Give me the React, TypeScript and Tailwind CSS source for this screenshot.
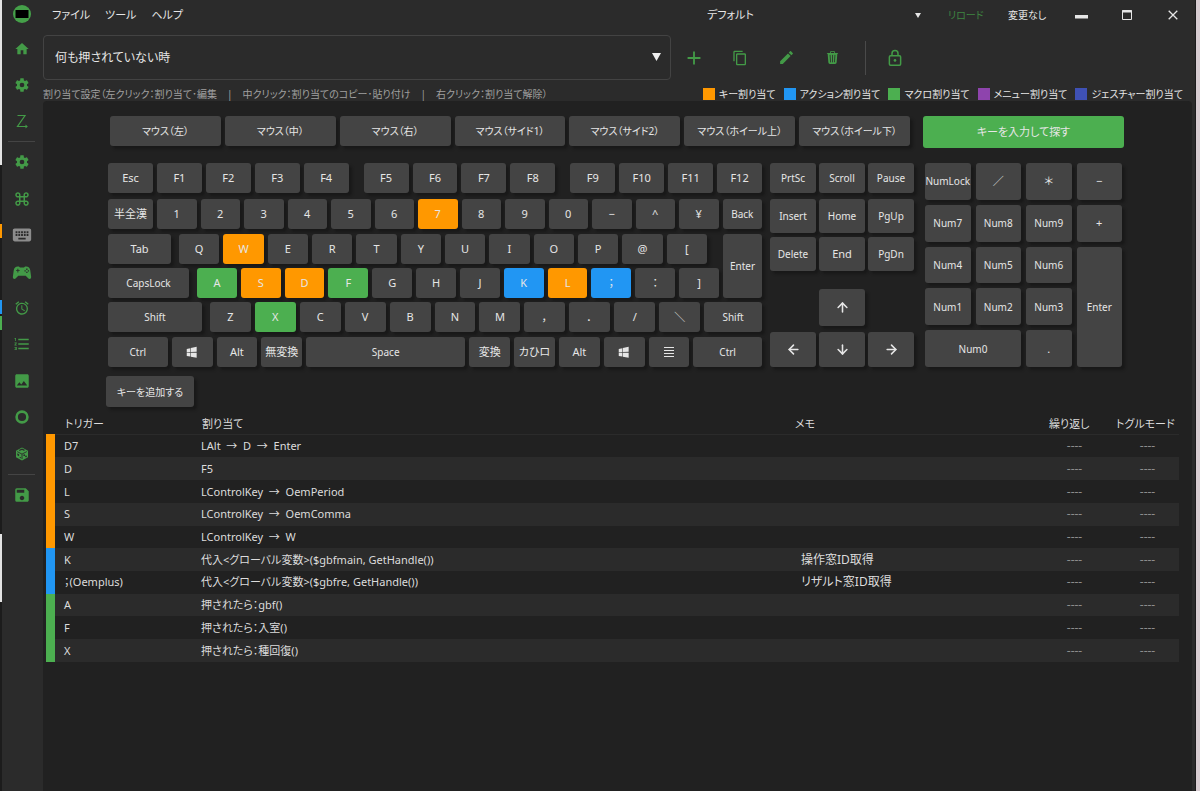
import React, { useState } from 'react';
import {
  MdAdd,
  MdAlarm,
  MdContentCopy,
  MdEdit,
  MdFormatListNumbered,
  MdHome,
  MdImage,
  MdKeyboardCommandKey,
  MdSave,
} from 'react-icons/md';
import { BsTrash3Fill } from 'react-icons/bs';
import { ArrowDown, ArrowLeft, ArrowRight, ArrowUp } from 'lucide-react';
import clsx from 'clsx';

type Kind = 'key' | 'action' | 'macro' | 'menu' | 'gesture';

const kindColor: Record<Kind, string> = {
  key: 'bg-[#ff9800]',
  action: 'bg-[#2196f3]',
  macro: 'bg-[#4caf50]',
  menu: 'bg-[#8e44ad]',
  gesture: 'bg-[#3f51b5]',
};

const legend: { kind: Kind; label: string }[] = [
  { kind: 'key', label: 'キー割り当て' },
  { kind: 'action', label: 'アクション割り当て' },
  { kind: 'macro', label: 'マクロ割り当て' },
  { kind: 'menu', label: 'メニュー割り当て' },
  { kind: 'gesture', label: 'ジェスチャー割り当て' },
];

const assignments: { kind: Kind; trigger: string; action: string; memo?: string }[] = [
  { kind: 'key', trigger: 'D7', action: 'LAlt  →  D  →  Enter' },
  { kind: 'key', trigger: 'D', action: 'F5' },
  { kind: 'key', trigger: 'L', action: 'LControlKey  →  OemPeriod' },
  { kind: 'key', trigger: 'S', action: 'LControlKey  →  OemComma' },
  { kind: 'key', trigger: 'W', action: 'LControlKey  →  W' },
  { kind: 'action', trigger: 'K', action: '代入<グローバル変数>($gbfmain, GetHandle())', memo: '操作窓ID取得' },
  { kind: 'action', trigger: '；(Oemplus)', action: '代入<グローバル変数>($gbfre, GetHandle())', memo: 'リザルト窓ID取得' },
  { kind: 'macro', trigger: 'A', action: '押されたら：gbf()' },
  { kind: 'macro', trigger: 'F', action: '押されたら：入室()' },
  { kind: 'macro', trigger: 'X', action: '押されたら：種回復()' },
];

const mouseKeys = [
  'マウス（左）',
  'マウス（中）',
  'マウス（右）',
  'マウス（サイド1）',
  'マウス（サイド2）',
  'マウス（ホイール上）',
  'マウス（ホイール下）',
];

interface KeyProps {
  children: React.ReactNode;
  kind?: Kind;
  className?: string;
  label?: string;
}

// Longer captions drop one text size so that they fit on the cap
const Key: React.FC<KeyProps> = ({ children, kind, className = 'flex-1', label }) => (
  <button
    aria-label={label}
    className={clsx(
      'flex min-w-0 items-center justify-center rounded-[3px] whitespace-nowrap text-[#e6e6e6] shadow-[3px_3px_3px_rgba(0,0,0,0.28)]',
      typeof children === 'string' && children.length > 3 ? 'text-[10px]' : 'text-[11px]',
      kind ? kindColor[kind] : 'bg-[#444444]',
      className
    )}
  >
    {children}
  </button>
);

const Keys: React.FC<{ names: string[]; kinds?: Record<string, Kind> }> = ({ names, kinds = {} }) => (
  <>
    {names.map((name) => (
      <Key key={name} kind={kinds[name]}>
        {name}
      </Key>
    ))}
  </>
);

const CogIcon = () => (
  <svg viewBox="0 0 24 24" className="size-4" fill="currentColor">
    <path d="M12,15.5A3.5,3.5 0 0,1 8.5,12A3.5,3.5 0 0,1 12,8.5A3.5,3.5 0 0,1 15.5,12A3.5,3.5 0 0,1 12,15.5M19.43,12.97C19.47,12.65 19.5,12.33 19.5,12C19.5,11.67 19.47,11.34 19.43,11L21.54,9.37C21.73,9.22 21.78,8.95 21.66,8.73L19.66,5.27C19.54,5.05 19.27,4.96 19.05,5.05L16.56,6.05C16.04,5.66 15.5,5.32 14.87,5.07L14.5,2.42C14.46,2.18 14.25,2 14,2H10C9.75,2 9.54,2.18 9.5,2.42L9.13,5.07C8.5,5.32 7.96,5.66 7.44,6.05L4.95,5.05C4.73,4.96 4.46,5.05 4.34,5.27L2.34,8.73C2.21,8.95 2.27,9.22 2.46,9.37L4.57,11C4.53,11.34 4.5,11.67 4.5,12C4.5,12.33 4.53,12.65 4.57,12.97L2.46,14.63C2.27,14.78 2.21,15.05 2.34,15.27L4.34,18.73C4.46,18.95 4.73,19.03 4.95,18.95L7.44,17.94C7.96,18.34 8.5,18.68 9.13,18.93L9.5,21.58C9.54,21.82 9.75,22 10,22H14C14.25,22 14.46,21.82 14.5,21.58L14.87,18.93C15.5,18.67 16.04,18.34 16.56,17.94L19.05,18.95C19.27,19.03 19.54,18.95 19.66,18.73L21.66,15.27C21.78,15.05 21.73,14.78 21.54,14.63L19.43,12.97Z" />
  </svg>
);

const ZigzagIcon = () => (
  <svg viewBox="0 0 16 16" className="size-4" fill="none" stroke="currentColor" strokeWidth="1.2">
    <path d="M3.5 2.5h7.500l-7.500 11h9" />
    <path d="M11.500 11.600l2.300 1.900-2.300 1.900z" fill="currentColor" stroke="none" />
  </svg>
);

const KeyboardIcon = () => (
  <svg viewBox="0 0 24 24" className="size-[22px]" fill="currentColor">
    <path d="M19,10H17V8H19M19,13H17V11H19M16,10H14V8H16M16,13H14V11H16M16,17H8V15H16M7,10H5V8H7M7,13H5V11H7M8,11H10V13H8M8,8H10V10H8M11,11H13V13H11M11,8H13V10H11M20,5H4C2.89,5 2,5.89 2,7V17A2,2 0 0,0 4,19H20A2,2 0 0,0 22,17V7C22,5.89 21.1,5 20,5Z" />
  </svg>
);

const GamepadIcon = () => (
  <svg viewBox="0 0 24 24" className="size-[22px]" fill="currentColor" fillRule="evenodd">
    <path d="M7.97,16L5,19C4.67,19.3 4.23,19.5 3.75,19.5A1.75,1.75 0 0,1 2,17.75V17.5L3,10.12C3.21,7.81 5.14,6 7.5,6H8.6L9.8,7.2H14.2L15.4,6H16.5C18.86,6 20.79,7.81 21,10.12L22,17.5V17.75A1.75,1.75 0 0,1 20.25,19.5C19.77,19.5 19.33,19.3 19,19L16.03,16H7.97M7,8.5V10H5.5V11H7V12.5H8V11H9.5V10H8V8.5H7M16.6,8.3V9.7H18V8.3H16.6M14.7,10V11.4H16.1V10H14.7M18.3,10V11.4H19.7V10H18.3M16.6,11.7V13.1H18V11.7H16.6Z" />
  </svg>
);

const RingIcon = () => (
  <svg viewBox="0 0 16 16" className="size-4" fill="none" stroke="currentColor" strokeWidth="2.6">
    <circle cx="8" cy="8" r="5.4" />
  </svg>
);

const CubeIcon = () => (
  <svg viewBox="0 0 16 16" className="size-4">
    <path d="M8 1.500l6 3.200v6.600l-6 3.200-6-3.200V4.700z" fill="currentColor" />
    <g fill="none" stroke="#2b2b2b">
      <path d="M3.200 5.600L8 8.100v5M8 8.100l4.800-2.500" strokeWidth=".9" />
      <path d="M5.200 4.500L8 3.100l2.500 1.300" strokeWidth="1.200" />
    </g>
    <g fill="#2b2b2b">
      <path d="M3.300 7.300l1.800 1v2l-1.800-1z" />
      <circle cx="10.200" cy="9.200" r=".9" />
      <circle cx="12" cy="10.300" r=".9" />
      <circle cx="6.300" cy="11.600" r=".7" />
    </g>
  </svg>
);

const LockIcon = () => (
  <svg viewBox="0 0 24 24" className="size-[18px]" fill="none" stroke="currentColor" strokeWidth="2">
    <rect x="4.500" y="9" width="15" height="12.500" rx="1.500" />
    <path d="M8 9V6a4 4 0 0 1 8 0v3" />
    <circle cx="12" cy="15.200" r="1.800" fill="currentColor" stroke="none" />
  </svg>
);

const WindowsIcon = () => (
  <svg viewBox="0 0 24 24" className="size-[14px]" fill="currentColor">
    <path d="M3,12V6.75L9,5.43V11.91L3,12M20,3V11.75L10,11.9V5.21L20,3M3,13L9,13.09V19.9L3,18.75V13M20,13.25V22L10,20.09V13.1L20,13.25Z" />
  </svg>
);

const MenuKeyIcon = () => (
  <svg viewBox="0 0 12 12" className="size-3" fill="currentColor" shapeRendering="crispEdges">
    <path d="M1 1h10v1H1zM1 4h10v1H1zM1 7h10v1H1zM1 10h10v1H1z" />
  </svg>
);

const SideButton: React.FC<{ label: string; active?: boolean; children: React.ReactNode }> = ({ label, active, children }) => (
  <button
    aria-label={label}
    className={clsx('flex items-center justify-center', active ? 'text-[#8c8c8c]' : 'text-[#439a47]')}
  >
    {children}
  </button>
);

const Sidebar = () => (
  <aside className="flex w-[41px] shrink-0 flex-col pr-[2px]">
    <div className="flex h-[31px] items-center justify-center pb-[3px]">
      <svg viewBox="0 0 18 18" className="size-[18px]">
        <circle cx="9" cy="9" r="9" fill="#45a049" />
        <rect x="2.500" y="5" width="13" height="8" fill="#000" />
      </svg>
    </div>
    <nav className="grid h-[108px] grid-rows-3">
      <SideButton label="ホーム"><MdHome size={16} /></SideButton>
      <SideButton label="設定"><CogIcon /></SideButton>
      <SideButton label="ジェスチャー"><ZigzagIcon /></SideButton>
    </nav>
    <hr className="mx-[6px] my-[2px] border-[#444444]" />
    <nav className="grid h-[328px] grid-rows-9">
      <SideButton label="プロファイル設定"><CogIcon /></SideButton>
      <SideButton label="コマンド"><MdKeyboardCommandKey size={18} /></SideButton>
      <SideButton label="キーボード" active><KeyboardIcon /></SideButton>
      <SideButton label="ゲームパッド"><GamepadIcon /></SideButton>
      <SideButton label="タイマー"><MdAlarm size={16} /></SideButton>
      <SideButton label="リスト"><MdFormatListNumbered size={18} /></SideButton>
      <SideButton label="画像"><MdImage size={18} /></SideButton>
      <SideButton label="リング"><RingIcon /></SideButton>
      <SideButton label="パッケージ"><CubeIcon /></SideButton>
    </nav>
    <hr className="mx-[6px] my-[2px] border-[#444444]" />
    <div className="grid h-9">
      <SideButton label="保存"><MdSave size={18} /></SideButton>
    </div>
  </aside>
);

const TitleBar = () => (
  <header className="-mr-1 flex h-[29px] items-center text-[11px] text-[#e6e6e6]">
    <nav className="flex flex-1 gap-[15px] pl-[9px]">
      <button>ファイル</button>
      <button>ツール</button>
      <button>ヘルプ</button>
    </nav>
    <div className="relative w-[214px]">
      <select aria-label="プロファイル" className="w-full appearance-none bg-transparent outline-none">
        <option>デフォルト</option>
      </select>
      <svg viewBox="0 0 6 5" className="pointer-events-none absolute top-[6px] right-0 w-[6px]" fill="#e6e6e6">
        <path d="M0 0h6L3 5z" />
      </svg>
    </div>
    <button className="ml-[27px] w-8 text-[10px] whitespace-nowrap text-[#3e8441]">リロード</button>
    <span className="ml-[28px] w-[50px] text-[10px] whitespace-nowrap">変更なし</span>
    <div className="flex w-[138px] shrink-0">
      <button aria-label="最小化" className="grid h-[29px] flex-1 place-items-center">
        <svg viewBox="0 0 13 12" className="w-[13px]" fill="currentColor"><path d="M0 6h13v3.500H0z" /></svg>
      </button>
      <button aria-label="最大化" className="grid h-[29px] flex-1 place-items-center">
        <svg viewBox="0 0 10 10" className="w-[10px]" fill="none" stroke="currentColor">
          <path d="M.5.500h9v9h-9z" />
          <path d="M0 1.500h10" strokeWidth="2" />
        </svg>
      </button>
      <button aria-label="閉じる" className="grid h-[29px] flex-1 place-items-center">
        <svg viewBox="0 0 10 10" className="w-[10px]" fill="none" stroke="currentColor" strokeWidth="1.300">
          <path d="M.7.700l8.600 8.600M9.300.700L.700 9.300" />
        </svg>
      </button>
    </div>
  </header>
);

const Toolbar = () => (
  <div className="flex items-center pt-[6px] text-[#439a47]">
    <div className="relative flex-[628]">
      <select
        aria-label="条件"
        className="h-[45px] w-full appearance-none rounded-[4px] border border-[#434343] bg-transparent px-[11px] text-[#e6e6e6] outline-none"
      >
        <option>何も押されていない時</option>
      </select>
      <svg viewBox="0 0 9 8" className="pointer-events-none absolute top-[18px] right-[10px] w-[9px]" fill="#f0f0f0">
        <path d="M0 0h9L4.500 8z" />
      </svg>
    </div>
    <div className="flex h-[34px] flex-[521]">
      <button aria-label="追加" className="grid w-[46px] place-items-center"><MdAdd size={22} /></button>
      <button aria-label="コピー" className="grid w-[46px] place-items-center"><MdContentCopy size={16} /></button>
      <button aria-label="編集" className="grid w-[46px] place-items-center"><MdEdit size={17} /></button>
      <button aria-label="削除" className="grid w-[46px] place-items-center"><BsTrash3Fill size={13} /></button>
      <div className="mx-[10px] w-px bg-[#4a4a4a]" />
      <button aria-label="ロック" className="grid w-[38px] place-items-center"><LockIcon /></button>
    </div>
  </div>
);

const Keyboard = () => (
  <div className="flex flex-[654] flex-col">
    <div className="flex h-[30px] gap-[15px]">
      <div className="flex flex-[241] gap-1"><Keys names={['Esc', 'F1', 'F2', 'F3', 'F4']} /></div>
      <div className="flex flex-[192] gap-1"><Keys names={['F5', 'F6', 'F7', 'F8']} /></div>
      <div className="flex flex-[192] gap-1"><Keys names={['F9', 'F10', 'F11', 'F12']} /></div>
    </div>
    <div className="mt-[6px] flex h-[30px] gap-1">
      <Key className="w-[45px] shrink-0">半全漢</Key>
      <Keys names={['1', '2', '3', '4', '5', '6', '7', '8', '9', '0', '−', '^', '¥', 'Back']} kinds={{ '7': 'key' }} />
    </div>
    <div className="mt-[5px] flex gap-1">
      <div className="flex flex-[611] flex-col gap-1">
        <div className="flex h-[30px] gap-2 pr-3">
          <Key className="w-[63px] shrink-0">Tab</Key>
          <div className="flex flex-1 gap-1">
            <Keys names={['Q', 'W', 'E', 'R', 'T', 'Y', 'U', 'I', 'O', 'P', '@', '[']} kinds={{ W: 'key' }} />
          </div>
        </div>
        <div className="flex h-[30px] gap-2">
          <Key className="w-[81px] shrink-0">CapsLock</Key>
          <div className="flex flex-1 gap-1">
            <Keys
              names={['A', 'S', 'D', 'F', 'G', 'H', 'J', 'K', 'L', '；', '：', ']']}
              kinds={{ A: 'macro', S: 'key', D: 'key', F: 'macro', K: 'action', L: 'key', '；': 'action' }}
            />
          </div>
        </div>
      </div>
      <Key className="flex-[39]">Enter</Key>
    </div>
    <div className="mt-1 flex h-[30px] gap-1">
      <Key className="mr-1 flex-[94]">Shift</Key>
      <div className="flex flex-[491] gap-1">
        <Keys names={['Z', 'X', 'C', 'V', 'B', 'N', 'M', '，', '．', '/', '＼']} kinds={{ X: 'macro' }} />
      </div>
      <Key className="flex-[58]">Shift</Key>
    </div>
    <div className="mt-[5px] flex h-[30px] gap-1">
      <Key className="flex-[60]">Ctrl</Key>
      <Key className="flex-[41]" label="Windows"><WindowsIcon /></Key>
      <Key className="flex-[41]">Alt</Key>
      <Key className="flex-[41]">無変換</Key>
      <Key className="flex-[160]">Space</Key>
      <Key className="flex-[41]">変換</Key>
      <Key className="flex-[41]">カひロ</Key>
      <Key className="flex-[41]">Alt</Key>
      <Key className="flex-[41]" label="Windows"><WindowsIcon /></Key>
      <Key className="flex-[41]" label="Menu"><MenuKeyIcon /></Key>
      <Key className="flex-[69]">Ctrl</Key>
    </div>
  </div>
);

const NavigationKeys = () => (
  <div className="flex flex-[144] flex-col">
    <div className="flex h-[30px] gap-[3px]">
      <Keys names={['PrtSc', 'Scroll', 'Pause']} />
    </div>
    <div className="mt-[6px] flex h-[34px] gap-[3px]">
      <Keys names={['Insert', 'Home', 'PgUp']} />
    </div>
    <div className="mt-1 flex h-[34px] gap-[3px]">
      <Keys names={['Delete', 'End', 'PgDn']} />
    </div>
    <div className="mt-auto grid grid-cols-3 grid-rows-[37px_35px] gap-x-[3px] gap-y-[6px]">
      <Key className="col-start-2" label="Up"><ArrowUp size={15} strokeWidth={2.5} /></Key>
      <Key className="col-start-1" label="Left"><ArrowLeft size={15} strokeWidth={2.5} /></Key>
      <Key className="" label="Down"><ArrowDown size={15} strokeWidth={2.5} /></Key>
      <Key className="" label="Right"><ArrowRight size={15} strokeWidth={2.5} /></Key>
    </div>
  </div>
);

const Numpad = () => (
  <div className="grid flex-[197] grid-cols-4 grid-rows-5 gap-[5px]">
    <Key className="">NumLock</Key>
    <Key className="">／</Key>
    <Key className="">＊</Key>
    <Key className="">−</Key>
    <Key className="">Num7</Key>
    <Key className="">Num8</Key>
    <Key className="">Num9</Key>
    <Key className="">+</Key>
    <Key className="">Num4</Key>
    <Key className="">Num5</Key>
    <Key className="">Num6</Key>
    <Key className="row-span-3">Enter</Key>
    <Key className="">Num1</Key>
    <Key className="">Num2</Key>
    <Key className="">Num3</Key>
    <Key className="col-span-2">Num0</Key>
    <Key className="">.</Key>
  </div>
);

const AssignmentTable = () => (
  <table className="h-[247px] w-full table-fixed border-collapse text-left text-[11px] text-[#dcdcdc]">
    <colgroup>
      <col className="w-[9px]" />
      <col className="w-[137px]" />
      <col />
      <col className="w-[248px]" />
      <col className="w-[73px]" />
      <col className="w-[73px]" />
    </colgroup>
    <thead>
      <tr className="h-[19px] whitespace-nowrap">
        <th />
        <th className="border-b border-[#2b2b2b] pl-[10px] font-normal">トリガー</th>
        <th className="border-b border-[#2b2b2b] pl-[10px] font-normal">割り当て</th>
        <th className="border-b border-[#2b2b2b] pl-[10px] font-normal">メモ</th>
        <th className="border-b border-[#2b2b2b] pl-[16px] font-normal">繰り返し</th>
        <th className="border-b border-[#2b2b2b] pl-[10px] font-normal">トグルモード</th>
      </tr>
    </thead>
    <tbody>
      {assignments.map((row, i) => (
        <tr key={row.trigger} className="leading-4 whitespace-pre">
          <td className={kindColor[row.kind]} />
          <td className={clsx('pl-[9px]', i % 2 && 'bg-[#2b2b2b]')}>{row.trigger}</td>
          <td className={clsx('pl-[9px]', i % 2 && 'bg-[#2b2b2b]')}>{row.action}</td>
          <td className={clsx('pl-[16px] text-[12px]', i % 2 && 'bg-[#2b2b2b]')}>{row.memo}</td>
          <td className={clsx('pl-[10px] text-center text-[12px] text-[#8c8c8c]', i % 2 && 'bg-[#2b2b2b]')}>----</td>
          <td className={clsx('pl-[10px] text-center text-[12px] text-[#8c8c8c]', i % 2 && 'bg-[#2b2b2b]')}>----</td>
        </tr>
      ))}
    </tbody>
  </table>
);

const App: React.FC = () => {
  const [searching, setSearching] = useState(false);

  return (
    <div className="flex min-h-screen bg-[#2b2b2b] font-['Noto_Sans','Noto_Sans_CJK_JP',sans-serif] text-[12px] leading-4 [font-feature-settings:'palt']">
      {/* Desktop visible beside the window */}
      <div className="flex w-[2px] shrink-0 flex-col bg-[#1c1c1c]">
        <div className="h-[165px] bg-[#e4e4e4]" />
        <div className="mt-[59px] h-[14px] bg-[#ff9800]" />
        <div className="mt-[62px] h-[14px] bg-[#2196f3]" />
        <div className="mt-[2px] h-[14px] bg-[#4caf50]" />
        <div className="mt-[204px] h-[68px] bg-[#e4e4e4]" />
      </div>

      <Sidebar />

      <main className="flex min-w-0 flex-1 flex-col pr-[3px]">
        <TitleBar />
        <Toolbar />

        <div className="flex h-[21px] items-center justify-between gap-4 pt-[7px] pr-[9px] text-[10px] whitespace-nowrap">
          <p className="text-[#a0a0a0]">
            割り当て設定（左クリック：割り当て･編集　|　中クリック：割り当てのコピー･貼り付け　|　右クリック：割り当て解除）
          </p>
          <ul className="flex gap-2 text-[#e6e6e6]">
            {legend.map(({ kind, label }) => (
              <li key={kind} className="flex items-center gap-1">
                <span className={clsx('size-3', kindColor[kind])} />
                {label}
              </li>
            ))}
          </ul>
        </div>

        {/* Keys */}
        <section className="rounded-t-[4px] bg-[#212121] pt-[15px] pr-[68px] pb-2 pl-[65px]">
          <div className="flex gap-[13px] pl-[2px]">
            <div className="flex h-[30px] flex-[800] gap-1">
              <Keys names={mouseKeys} />
            </div>
            <button
              onClick={() => setSearching(!searching)}
              aria-pressed={searching}
              className="h-8 flex-[201] rounded-[3px] bg-[#4caf50] text-[11px] text-[#e6e6e6]"
            >
              キーを入力して探す
            </button>
          </div>
          <div className="mt-[15px] flex pr-[2px]">
            <Keyboard />
            <div className="w-2" />
            <NavigationKeys />
            <div className="w-[11px]" />
            <Numpad />
          </div>
          <div className="mt-[9px] -ml-[2px] flex h-[31px]">
            <Key className="w-[88px]">キーを追加する</Key>
          </div>
        </section>

        {/* Assignments */}
        <section className="flex-1 bg-[#212121] pr-[13px] pl-[3px]">
          <AssignmentTable />
        </section>
      </main>
      <div className="w-[5px] shrink-0 border-l border-[#1c1c1c] bg-[#d8cdd2]" />
    </div>
  );
};

export default App;
